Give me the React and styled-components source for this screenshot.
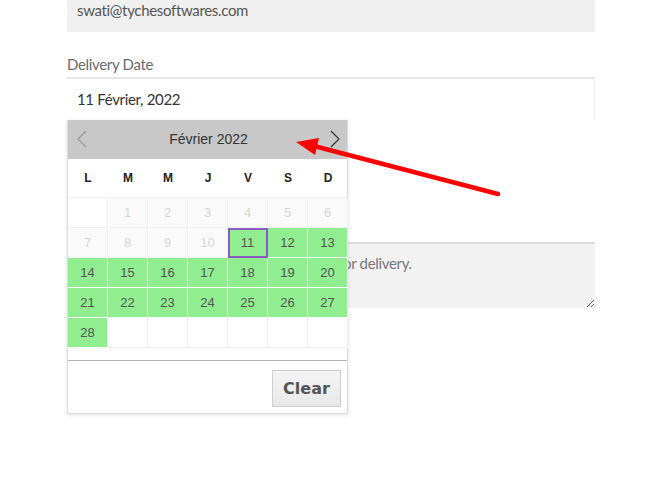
import React from "react";
import styled, { createGlobalStyle } from "styled-components";

const GlobalStyle = createGlobalStyle`
    body {
        margin: 0;
        background: #ffffff;
        font-family: "Lato", "Noto Sans", sans-serif;
    }
`;

const weekdays = ["L", "M", "M", "J", "V", "S", "D"];

// each cell: day number (or null) and its state
const buildDays = () => {
    const cells = [{ day: null, kind: "blank" }];
    for (let d = 1; d <= 28; d++) {
        if (d < 11) cells.push({ day: d, kind: "disabled" });
        else if (d === 11) cells.push({ day: d, kind: "selected" });
        else cells.push({ day: d, kind: "open" });
    }
    while (cells.length < 35) cells.push({ day: null, kind: "empty" });
    return cells;
};

const App = () => {
    const days = buildDays();

    return (
        <>
            <GlobalStyle />
            <Page>
                <Form>
                    <EmailBox>swati@tychesoftwares.com</EmailBox>

                    <Label>Delivery Date</Label>
                    <DateField>
                        11 Février, 2022
                        <Calendar>
                            <CalHeader>
                                <NavArrow $dim>
                                    <svg width="10" height="18" viewBox="0 0 10 18">
                                        <polyline points="9,1 1,9 9,17" fill="none" stroke="currentColor" strokeWidth="1.2" />
                                    </svg>
                                </NavArrow>
                                <MonthTitle>Février 2022</MonthTitle>
                                <NavArrow>
                                    <svg width="10" height="18" viewBox="0 0 10 18">
                                        <polyline points="1,1 9,9 1,17" fill="none" stroke="currentColor" strokeWidth="1.2" />
                                    </svg>
                                </NavArrow>
                            </CalHeader>

                            <WeekRow>
                                {weekdays.map((w, i) => (
                                    <WeekDay key={i}>{w}</WeekDay>
                                ))}
                            </WeekRow>

                            <DayGrid>
                                {days.map((c, i) => (
                                    <DayCell key={i} $kind={c.kind}>
                                        {c.day}
                                    </DayCell>
                                ))}
                            </DayGrid>

                            <ButtonPane>
                                <ClearButton>Clear</ClearButton>
                            </ButtonPane>
                        </Calendar>
                    </DateField>

                    <Notes placeholder="Notes about your order, e.g. special notes for delivery." />
                </Form>

                <Annotation width="667" height="478" viewBox="0 0 667 478">
                    <line x1="498" y1="194" x2="314" y2="146" stroke="#ff0000" strokeWidth="4.5" strokeLinecap="round" />
                    <polygon points="296,142 319,138 315,155" fill="#ff0000" />
                </Annotation>
            </Page>
        </>
    );
};

export default App;

const Page = styled.div`
    position: relative;
    width: 667px;
    height: 478px;
    overflow: hidden;
`;

const Form = styled.div`
    display: flex;
    flex-direction: column;
    width: 528px;
    margin-left: 67px;
    letter-spacing: -0.33px;
`;

const EmailBox = styled.div`
    height: 32px;
    box-sizing: border-box;
    padding: 0 10px;
    background: #f0f0f0;
    font-size: 15px;
    line-height: 20px;
    color: #555;
`;

const Label = styled.div`
    margin-top: 23px;
    margin-bottom: 4px;
    font-size: 15px;
    line-height: 18px;
    color: #6b6b6b;
`;

const DateField = styled.div`
    position: relative;
    height: 43px;
    box-sizing: border-box;
    padding: 10px 10px 11px;
    border-top: 2px solid #e6e6e6;
    border-right: 1px solid #f3f3f3;
    font-size: 15px;
    line-height: 20px;
    color: #333;
`;

const Calendar = styled.div`
    position: absolute;
    top: 100%;
    left: 0;
    z-index: 5;
    width: 281px;
    box-sizing: border-box;
    border: 1px solid #dddddd;
    border-top: none;
    background: #fff;
    box-shadow: 0 1px 4px rgba(0, 0, 0, 0.12);
    font-family: "Liberation Sans", Arial, sans-serif;
    letter-spacing: 0;
`;

const CalHeader = styled.div`
    height: 39px;
    display: flex;
    align-items: center;
    justify-content: space-between;
    padding: 0 7px 0 9px;
    background: #c8c8c8;
`;

const NavArrow = styled.div`
    display: flex;
    align-items: center;
    color: ${(p) => (p.$dim ? "#9a9a9a" : "#333")};
    margin-top: -2px;
`;

const MonthTitle = styled.div`
    font-size: 14px;
    color: #333;
    margin-top: -1px;
`;

const WeekRow = styled.div`
    display: grid;
    grid-template-columns: repeat(7, 40px);
    height: 38px;
    align-items: center;
`;

const WeekDay = styled.div`
    text-align: center;
    font-size: 12px;
    font-weight: bold;
    color: #222;
`;

const cellBg = {
    blank: "#ffffff",
    empty: "#ffffff",
    disabled: "#fafafa",
    open: "#90ee90",
    selected: "#90ee90",
};

const cellLine = {
    blank: "#f1f1f1",
    empty: "#f1f1f1",
    disabled: "#f1f1f1",
    open: "#ffffff",
    selected: "#ffffff",
};

const DayGrid = styled.div`
    display: grid;
    grid-template-columns: repeat(7, 40px);
    grid-auto-rows: 30px;
    border-top: 1px solid #f1f1f1;
`;

const DayCell = styled.div`
    box-sizing: border-box;
    display: flex;
    align-items: center;
    justify-content: center;
    background: ${(p) => cellBg[p.$kind]};
    border-right: 1px solid ${(p) => cellLine[p.$kind]};
    border-bottom: 1px solid ${(p) => cellLine[p.$kind]};
    outline: ${(p) => (p.$kind === "selected" ? "2px solid #8a5cc2" : "none")};
    outline-offset: -2px;
    font-size: 13px;
    color: ${(p) => (p.$kind === "disabled" ? "#d6d6d6" : "#555")};
`;

const ButtonPane = styled.div`
    margin-top: 12px;
    border-top: 1px solid #b4b4b4;
    display: flex;
    justify-content: flex-end;
    padding: 9px 6px 6px;
`;

const ClearButton = styled.button`
    width: 69px;
    height: 37px;
    border: 1px solid #cfcfcf;
    background: linear-gradient(#f4f4f4, #e8e8e8);
    font-family: "DejaVu Sans", Verdana, sans-serif;
    font-weight: bold;
    font-size: 16px;
    color: #555;
    padding: 0;
`;

const Notes = styled.textarea`
    display: block;
    width: 528px;
    height: 66px;
    box-sizing: border-box;
    margin: 122px 0 0;
    padding: 9px 10px;
    border: none;
    border-top: 2px solid #dcdcdc;
    background: #f2f2f2;
    font-family: "Lato", "Noto Sans", sans-serif;
    font-size: 15px;
    line-height: 20px;
    letter-spacing: -0.33px;
    &::placeholder {
        color: #777;
    }
`;

const Annotation = styled.svg`
    position: absolute;
    top: 0;
    left: 0;
    pointer-events: none;
    z-index: 10;
`;
